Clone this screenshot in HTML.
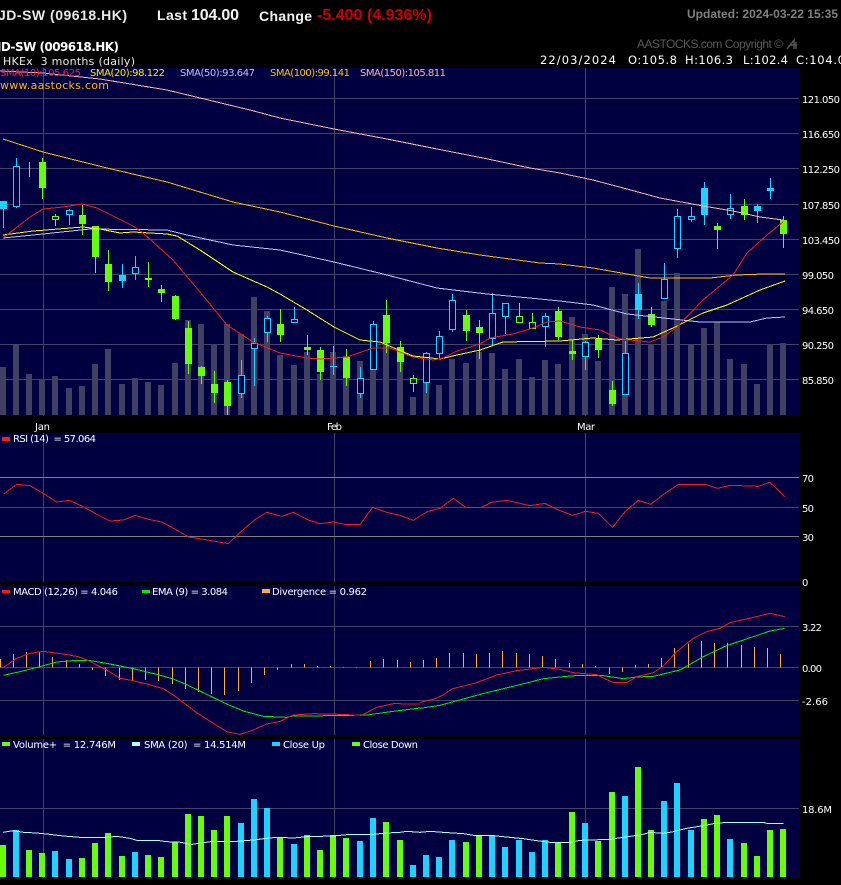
<!DOCTYPE html>
<html><head><meta charset="utf-8"><title>JD-SW (09618.HK)</title>
<style>
html,body{margin:0;padding:0;background:#000;width:841px;height:885px;overflow:hidden}
svg{display:block}
.l{fill:none;stroke-width:1;shape-rendering:crispEdges}
.n{vector-effect:non-scaling-stroke}
.c{shape-rendering:crispEdges;fill:none}
text{font-family:"DejaVu Sans",sans-serif;font-size:10px;fill:#fff}
.a{font-family:"Liberation Sans",sans-serif;font-weight:bold}
</style></head><body>
<svg width="841" height="885" viewBox="0 0 841 885" xmlns="http://www.w3.org/2000/svg">
<rect width="841" height="885" fill="#000"/>
<g fill="#000040"><rect y="68" width="800" height="348"/><rect y="433" width="800" height="149"/><rect y="586" width="800" height="149"/><rect y="739" width="800" height="139"/></g>
<!-- grid -->
<path class="c" stroke="#444466" d="M0 98.5H799M0 133.5H799M0 168.5H799M0 204.5H799M0 239.5H799M0 274.5H799M0 309.5H799M0 344.5H799M0 379.5H799M0 507.5H799M0 626.5H799M0 667.5H799M0 700.5H799M0 808.5H799M43.5 68V416M334.5 68V416M585.5 68V416M43.5 433V582M334.5 433V582M585.5 433V582M43.5 586V735M334.5 586V735M585.5 586V735M43.5 739V878M334.5 739V878M585.5 739V878"/>
<path class="c" stroke="#80808f" d="M0 477.5H799"/><path class="c" stroke="#808070" d="M0 536.5H799"/>
<!-- grey volume -->
<path class="c" stroke="#404060" stroke-width="6" d="M3 415V367M16 415V345M29 415V374M42 415V379M55 415V376M69 415V388M82 415V386M95 415V364M108 415V349M122 415V384M135 415V378M148 415V382M161 415V385M175 415V363M188 415V320M201 415V324M214 415V344M227 415V324M241 415V334M254 415V297M267 415V311M280 415V355M294 415V365M307 415V352M320 415V374M333 415V352M346 415V356M360 415V361M373 415V326M386 415V332M400 415V359M413 415V397M426 415V382M439 415V385M452 415V359M466 415V363M479 415V352M492 415V353M505 415V369M519 415V359M532 415V377M545 415V360M558 415V364M572 415V317M585 415V334M598 415V361M612 415V287M625 415V294M638 415V249M651 415V344M664 415V301M677 415V273M691 415V344M704 415V328M717 415V322M730 415V359M744 415V364M757 415V384M770 415V344M783 415V343"/>
<!-- wicks -->
<path class="c" stroke="#66ff00" d="M29.5 162V177M42.5 158V199M55.5 214V226M82.5 205V235M95.5 226V273M108.5 250V291M148.5 262V287M161.5 285V302M175.5 295V320M188.5 321V374M201.5 366V384M214.5 371V403M227.5 380V415M280.5 309V342M307.5 335V355M320.5 347V380M346.5 349V386M386.5 300V353M400.5 341V372M413.5 375V392M466.5 310V341M479.5 320V359M519.5 303V323M532.5 313V329M558.5 307V340M572.5 340V360M598.5 335V358M612.5 381V406M651.5 307V327M717.5 223V249M744.5 199V220M783.5 216V248"/>
<path class="c" stroke="#1cd3ff" d="M3.5 201V228M16.5 158V208M69.5 209V225M122.5 264V288M135.5 256V280M241.5 360V398M254.5 338V386M267.5 316V342M294.5 307V323M333.5 346V375M360.5 367V398M373.5 321V370M426.5 352V393M439.5 331V358M452.5 294V332M492.5 293V346M505.5 303V334M545.5 313V347M585.5 341V370M625.5 341V395M638.5 283V319M664.5 263V299M677.5 209V258M691.5 207V222M704.5 182V225M730.5 194V219M757.5 204V223M770.5 178V199"/>
<!-- filled bodies -->
<path class="c" stroke="#66ff00" stroke-width="7" d="M42.5 162V188M82.5 215V224M95.5 226V257M108.5 264V282M148.5 278V280M161.5 289V293M175.5 296V319M188.5 328V364M201.5 367V376M214.5 384V393M227.5 382V406M280.5 324V335M307.5 347V350M320.5 350V372M346.5 357V378M386.5 315V343M400.5 347V362M466.5 315V331M479.5 327V333M558.5 311V337M572.5 351V354M598.5 339V350M612.5 390V404M651.5 314V325M717.5 226V230M744.5 206V215M783.5 220V234"/>
<path class="c" stroke="#1cd3ff" stroke-width="7" d="M3.5 201V209M122.5 275V281M333.5 366V367M638.5 294V310M704.5 188V215M757.5 206V211M770.5 188V191"/>
<!-- hollow bodies -->
<path shape-rendering="crispEdges" fill="#000040" stroke="#66ff00" d="M52.5 216.5h6v3h-6zM410.5 378.5h6v5h-6zM516.5 316.5h6v6h-6zM529.5 322.5h6v6h-6z"/>
<path shape-rendering="crispEdges" fill="#000040" stroke="#1cd3ff" d="M13.5 166.5h6v40h-6zM66.5 210.5h6v4h-6zM132.5 267.5h6v6h-6zM238.5 375.5h6v18h-6zM251.5 343.5h6v5h-6zM264.5 318.5h6v14h-6zM291.5 319.5h6v3h-6zM357.5 378.5h6v15h-6zM370.5 324.5h6v45h-6zM423.5 353.5h6v29h-6zM436.5 336.5h6v17h-6zM449.5 300.5h6v29h-6zM489.5 313.5h6v25h-6zM502.5 303.5h6v13h-6zM542.5 316.5h6v10h-6zM582.5 342.5h6v14h-6zM622.5 353.5h6v41h-6zM661.5 279.5h6v19h-6zM674.5 216.5h6v32h-6zM688.5 216.5h6v3h-6zM727.5 208.5h6v6h-6z"/>
<!-- MAs -->
<polyline class="l" stroke="#ffb0b0" points="0,71 43,73 100,79 167,90 250,110 280,118 334,129 387,139 437,149 483,158 530,168 560,173 593,180 627,189 660,198 703,206 733,211 760,217 783,220"/>
<polyline class="l" stroke="#ffb800" points="3,139 43,152 107,168 167,182 233,202 280,212 334,226 387,238 437,248 480,255 540,263 560,264 593,268 627,274 650,278 710,278 737,275 763,274 785,274"/>
<polyline class="l" stroke="#c0c0ff" points="3,238 43,234 90,229 167,230 187,235 233,245 280,250 334,262 387,275 437,288 487,294 540,299 560,301 593,305 627,314 673,319 700,322 750,322 767,318 785,317"/>
<polyline class="l" stroke="#ffff00" points="3,235 33,231 83,227 100,229 120,233 133,232 167,234 177,236 200,250 233,272 267,287 280,294 307,310 334,327 360,340 380,342 413,356 440,359 457,355 480,350 503,342 560,341 593,338 617,340 653,337 673,328 703,313 727,305 760,290 785,281"/>
<polyline class="l" stroke="#ff1818" points="3,238 30,217 43,209 63,207 82,204 97,208 133,226 143,233 173,260 200,292 227,325 253,342 280,353 307,358 320,359 347,357 373,348 390,348 413,357 433,360 443,358 457,351 480,344 490,338 513,334 533,328 547,322 560,321 580,327 600,330 620,339 650,342 663,337 677,327 703,300 733,275 747,253 767,235 783,222"/>
<!-- RSI -->
<g transform="translate(0 430) scale(.33333)"><polyline class="l n" stroke="#ff1818" points="10,193 50,163 90,167 130,190 170,216 208,211 250,230 290,253 330,273 370,270 405,256 445,268 485,276 525,297 565,321 605,327 645,334 685,341 725,303 765,269 800,247 845,259 880,247 925,270 960,281 1000,276 1040,284 1080,284 1118,232 1160,247 1200,256 1240,271 1260,258"/></g>
<g transform="translate(420 430) scale(.33333)"><polyline class="l n" stroke="#ff1818" points="0,258 22,245 60,235 100,205 137,232 185,232 215,217 260,211 330,227 375,220 415,240 458,256 497,244 535,250 578,292 615,245 655,211 692,223 735,190 775,163 855,163 893,175 930,166 1015,169 1050,157 1094,200"/></g>
<!-- Divergence -->
<g transform="translate(0 580) scale(1 .33333)"><path class="c n" stroke="#ffb020" d="M.5 262V237M13.5 262V222M26.5 262V216M39.5 262V217M52.5 262V231M66.5 262V240M79.5 262V252M92.5 262V270M105.5 262V288M119.5 262V300M132.5 262V302M145.5 262V300M158.5 262V303M172.5 262V312M185.5 262V327M198.5 262V336M211.5 262V342M224.5 262V345M238.5 262V333M251.5 262V309M264.5 262V285M277.5 262V270M291.5 262V252M304.5 262V252M317.5 262V258M330.5 262V258M343.5 262V261M356.5 262V261M370.5 262V243M383.5 262V237M397.5 262V240M410.5 262V246M423.5 262V240M436.5 262V234M449.5 262V219M463.5 262V219M476.5 262V222M489.5 262V219M502.5 262V213M516.5 262V219M529.5 262V222M542.5 262V228M555.5 262V237M569.5 262V249M582.5 262V252M595.5 262V258M609.5 262V282M622.5 262V276M635.5 262V255M648.5 262V252M661.5 262V234M674.5 262V204M688.5 262V190M701.5 262V183M714.5 262V189M727.5 262V189M741.5 262V195M754.5 262V201M767.5 262V204M780.5 262V222"/></g>
<!-- MACD -->
<g transform="translate(0 580) scale(.33333)">
<polyline class="l n" stroke="#00ee00" points="10,286 60,275 120,260 170,246 230,241 265,241 320,250 400,266 470,283 520,297 560,314 620,343 680,372 730,393 790,409 860,412 880,408 1000,407 1100,405 1180,394 1260,384"/>
<polyline class="l n" stroke="#ff1818" points="10,263 50,235 90,220 130,214 190,222 235,230 265,242 320,270 360,295 400,302 440,312 490,326 520,345 590,398 640,430 680,455 720,463 760,450 800,432 840,424 880,405 940,401 1020,403 1085,406 1130,382 1180,371 1260,372"/>
</g>
<g transform="translate(420 580) scale(.33333)">
<polyline class="l n" stroke="#00ee00" points="0,385 60,376 100,365 200,338 300,314 370,296 440,289 480,286 550,287 610,296 650,291 700,289 780,270 850,230 920,197 1000,170 1050,153 1094,145"/>
<polyline class="l n" stroke="#ff1818" points="0,367 40,358 70,345 95,327 170,308 230,285 290,272 370,262 420,268 460,278 530,284 580,308 620,308 650,290 700,278 730,258 770,215 820,175 860,155 900,145 930,128 1000,112 1050,100 1094,110"/>
</g>
<!-- Volume -->
<path class="c" stroke="#66ff00" stroke-width="6" d="M3 877V845M29 877V850M42 877V853M82 877V858M95 877V843M108 877V833M122 877V856M148 877V855M161 877V857M175 877V842M188 877V814M201 877V816M214 877V830M227 877V816M280 877V837M307 877V835M320 877V850M333 877V835M346 877V838M386 877V822M400 877V840M466 877V842M479 877V835M558 877V843M572 877V812M598 877V841M612 877V792M638 877V767M651 877V830M704 877V819M717 877V815M744 877V843M757 877V856M770 877V830M783 877V829"/>
<path class="c" stroke="#1cd3ff" stroke-width="6" d="M16 877V830M55 877V851M69 877V859M135 877V852M241 877V823M254 877V799M267 877V808M294 877V844M360 877V841M373 877V818M413 877V865M426 877V855M439 877V857M452 877V840M492 877V835M505 877V847M519 877V840M532 877V852M545 877V840M585 877V823M625 877V796M664 877V801M677 877V783M691 877V830M730 877V839"/>
<g transform="translate(0 730) scale(.33333)"><polyline class="l n" stroke="#aaffff" points="9,307 40,302 70,307 110,309 140,312 190,318 240,322 320,322 350,319 390,325 410,331 470,331 500,335 545,337 570,344 610,338 640,334 710,334 760,330 800,325 830,322 880,324 920,320 1000,318 1040,314 1120,313 1160,309 1200,307 1220,304 1260,307"/></g>
<g transform="translate(420 730) scale(.33333)"><polyline class="l n" stroke="#aaffff" points="0,307 30,304 70,307 130,311 160,316 220,317 270,322 310,326 350,332 390,337 450,337 480,331 570,328 610,322 670,313 690,307 730,310 760,305 800,295 850,287 880,281 920,277 1030,277 1040,280 1090,280"/></g>
<!-- Header -->
<text class="a" x="-2" y="20" style="font-size:14px;fill:#e8e8e8" textLength="129">JD-SW (09618.HK)</text>
<text class="a" x="157" y="20" style="font-size:14px;fill:#f4f4f4" textLength="30">Last</text>
<text class="a" x="191" y="20" style="font-size:16px;fill:#f4f4f4" textLength="48">104.00</text>
<text class="a" x="259" y="21" style="font-size:14px;fill:#f4f4f4" textLength="53">Change</text>
<text class="a" x="317" y="20" style="font-size:16px;fill:#cc0000" textLength="115">-5.400 (4.936%)</text>
<text class="a" x="687" y="18" style="font-size:12px;fill:#808080" textLength="151">Updated: 2024-03-22 15:35</text>
<text x="-3" y="51" style="font-size:12px;font-weight:bold" textLength="122">JD-SW (009618.HK)</text>
<text x="3" y="65" style="font-size:11px;fill:#e8e8e8" textLength="132" xml:space="preserve">HKEx  3 months (daily)</text>
<text x="637" y="48" style="font-family:'Liberation Sans',sans-serif;font-size:12px;fill:#5a5a5a" textLength="146">AASTOCKS.com Copyright ©</text>
<path d="M787 49L794 40V49M790 45H797M796 42V49" stroke="#555" stroke-width="1.5" fill="none"/>
<text x="540" y="64" style="font-size:11.5px" textLength="76">22/03/2024</text>
<text x="628" y="64" style="font-size:11.5px" textLength="49">O:105.8</text>
<text x="685" y="64" style="font-size:11.5px" textLength="48">H:106.3</text>
<text x="743" y="64" style="font-size:11.5px" textLength="45">L:102.4</text>
<text x="796" y="64" style="font-size:11.5px" textLength="49">C:104.0</text>
<!-- Legend -->
<text x="0" y="76" style="fill:#ff2020" textLength="81">SMA(10):105.625</text>
<text x="90" y="76" style="fill:#ffee00" textLength="75">SMA(20):98.122</text>
<text x="180" y="76" style="fill:#c0c0ff" textLength="75">SMA(50):93.647</text>
<text x="270" y="76" style="fill:#ffc800" textLength="80">SMA(100):99.141</text>
<text x="360" y="76" style="fill:#ffb8b8" textLength="86">SMA(150):105.811</text>
<text x="0" y="89" style="font-size:11px;fill:#ffb800" textLength="109">www.aastocks.com</text>
<!-- Axis -->
<g>
<text x="802" y="103" textLength="38">121.050</text><text x="802" y="138" textLength="38">116.650</text><text x="802" y="173" textLength="38">112.250</text><text x="802" y="209" textLength="38">107.850</text><text x="802" y="244" textLength="38">103.450</text><text x="802" y="279" textLength="32">99.050</text><text x="802" y="314" textLength="32">94.650</text><text x="802" y="349" textLength="32">90.250</text><text x="802" y="384" textLength="32">85.850</text>
<text x="802" y="482" textLength="12">70</text><text x="802" y="512" textLength="12">50</text><text x="802" y="541" textLength="12">30</text><text x="802" y="586" textLength="6">0</text>
<text x="802" y="631" textLength="20">3.22</text><text x="802" y="672" textLength="20">0.00</text><text x="802" y="705" textLength="26">-2.66</text>
<text x="802" y="813" textLength="30">18.6M</text>
<text x="35" y="430" textLength="15">Jan</text><text x="327" y="430" textLength="15">Feb</text><text x="577" y="430" textLength="18">Mar</text>
</g>
<!-- Pane legends -->
<rect x="2" y="437" width="8" height="4" fill="#ff1818"/>
<text x="13" y="442" textLength="83" xml:space="preserve">RSI (14)  = 57.064</text>
<rect x="2" y="590" width="8" height="3" fill="#ff1818"/>
<text x="13" y="595" textLength="105">MACD (12,26) = 4.046</text>
<rect x="142" y="590" width="8" height="3" fill="#00ee00"/>
<text x="152" y="595" textLength="76">EMA (9) = 3.084</text>
<rect x="262" y="589" width="8" height="4" fill="#ffb020"/>
<text x="272" y="595" textLength="95">Divergence = 0.962</text>
<rect x="2" y="742" width="8" height="4" fill="#66ff00"/>
<text x="13" y="748" textLength="103" xml:space="preserve">Volume+  = 12.746M</text>
<rect x="132" y="742" width="8" height="4" fill="#aaffff"/>
<text x="144" y="748" textLength="102" xml:space="preserve">SMA (20)  = 14.514M</text>
<rect x="272" y="742" width="8" height="4" fill="#1cd3ff"/>
<text x="283" y="748" textLength="42">Close Up</text>
<rect x="352" y="742" width="8" height="4" fill="#66ff00"/>
<text x="363" y="748" textLength="55">Close Down</text>
</svg>
</body></html>
